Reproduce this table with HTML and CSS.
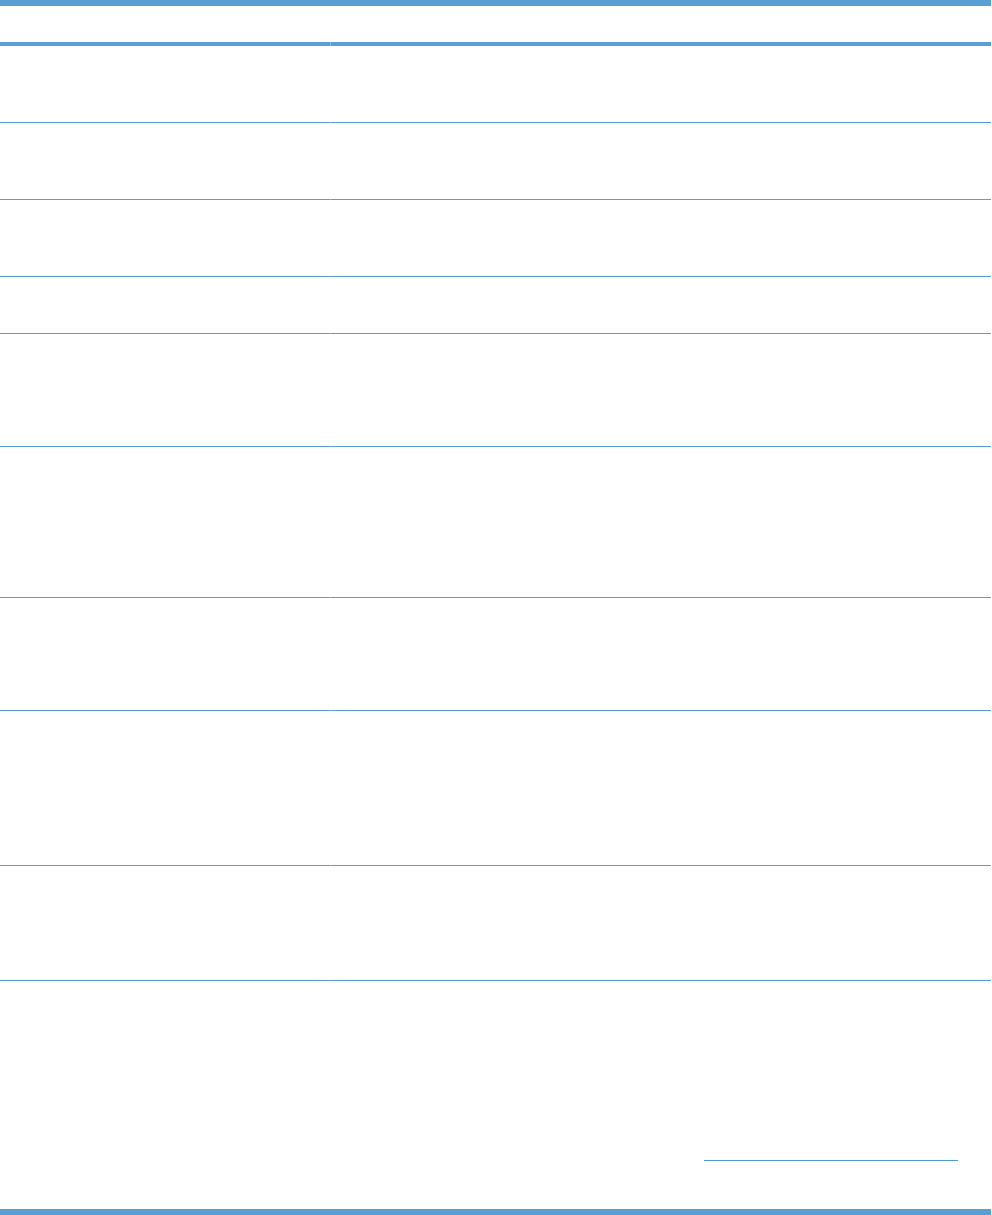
FILE: index.html
```html
<!DOCTYPE html>
<html lang="en">

<head>
    <meta charset="UTF-8">
    <title>Table</title>
    <meta name="viewport" content="width=device-width, initial-scale=1">
    <link rel="stylesheet" href="styles.css">
</head>

<body>
    <div class="table">
        <div class="row head">
            <div class="cell"></div>
            <div class="cell"></div>
        </div>
        <div class="row h77">
            <div class="cell"></div>
            <div class="cell"></div>
        </div>
        <div class="row h77">
            <div class="cell"></div>
            <div class="cell"></div>
        </div>
        <div class="row h77">
            <div class="cell"></div>
            <div class="cell"></div>
        </div>
        <div class="row h57">
            <div class="cell"></div>
            <div class="cell"></div>
        </div>
        <div class="row h113">
            <div class="cell"></div>
            <div class="cell"></div>
        </div>
        <div class="row h151">
            <div class="cell"></div>
            <div class="cell"></div>
        </div>
        <div class="row h113">
            <div class="cell"></div>
            <div class="cell"></div>
        </div>
        <div class="row h155">
            <div class="cell"></div>
            <div class="cell"></div>
        </div>
        <div class="row h115">
            <div class="cell"></div>
            <div class="cell"></div>
        </div>
        <div class="row last">
            <div class="cell"></div>
            <div class="cell">
                <span class="link-line"></span>
            </div>
        </div>
    </div>
</body>

</html>
```

FILE: styles.css
```css
* {
    margin: 0;
    padding: 0;
    box-sizing: border-box;
}

body {
    font-family: 'Liberation Sans', Arial, sans-serif;
    background-color: #FFFFFF;
}

.table {
    width: 991px;
    border-top: 6px solid #5A9FD4;
    border-bottom: 6px solid #5A9FD4;
}

.row {
    display: grid;
    grid-template-columns: 330px 660px;
    column-gap: 1px;
    background: linear-gradient(#8FBFE4, #8FBFE4) left bottom / 100% 1px no-repeat;
}

.row .cell {
    border-bottom: 1px solid #5A9FD4;
}

.head {
    background-size: 100% 4px;
}

.head .cell {
    height: 40px;
    border-bottom: 4px solid #5A9FD4;
}

.h57 .cell {
    height: 57px;
}

.h77 .cell {
    height: 77px;
}

.h113 .cell {
    height: 113px;
}

.h115 .cell {
    height: 115px;
}

.h151 .cell {
    height: 151px;
}

.h155 .cell {
    height: 155px;
}

.last {
    background: none;
}

.last .cell {
    height: 228px;
    border-bottom: none;
}

.link-line {
    display: block;
    width: 254px;
    margin: 179px 0 0 373px;
    border-bottom: 1px solid #4C9AD6;
}
```
